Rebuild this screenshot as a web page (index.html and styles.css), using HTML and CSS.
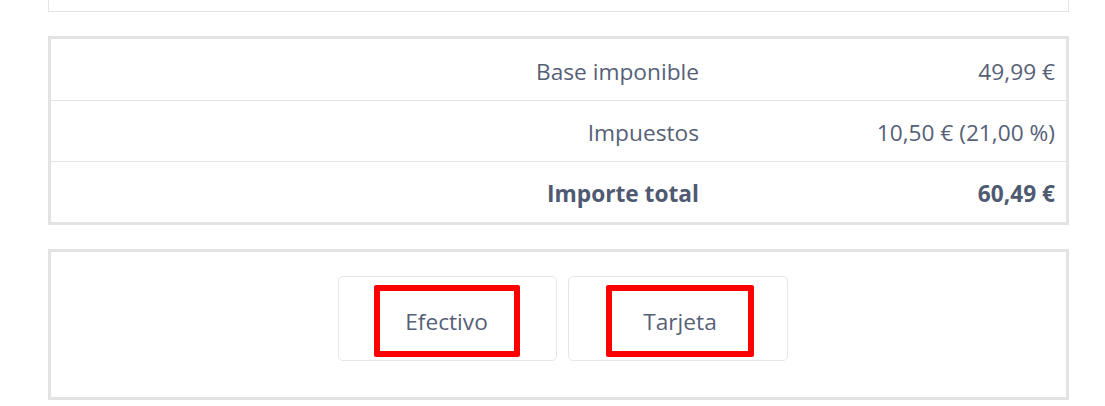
FILE: index.html
```html
<!DOCTYPE html>
<html lang="es">
<head>
<meta charset="utf-8">
<title>Resumen de pago</title>
<link rel="stylesheet" href="styles.css">
</head>
<body>
<div class="page">
  <div class="panel-prev"></div>

  <div class="totals">
    <div class="row">
      <div class="label">Base imponible</div>
      <div class="value">49,99 €</div>
    </div>
    <div class="row">
      <div class="label">Impuestos</div>
      <div class="value">10,50 € (21,00 %)</div>
    </div>
    <div class="row row-total">
      <div class="label">Importe total</div>
      <div class="value">60,49 €</div>
    </div>
  </div>

  <div class="payment">
    <button class="pay-btn" type="button"><span class="mark mark-cash">Efectivo</span></button>
    <button class="pay-btn pay-btn-wide" type="button"><span class="mark mark-card">Tarjeta</span></button>
  </div>
</div>
</body>
</html>
```

FILE: styles.css
```css
html, body {
  margin: 0;
  padding: 0;
  background: #ffffff;
}

body {
  font-family: "Open Sans", "Noto Sans", sans-serif;
  color: #566077;
}

.page {
  width: 1021px;
  margin-left: 48px;
  display: flex;
  flex-direction: column;
  gap: 24px;
}

.panel-prev {
  height: 11px;
  border: 1px solid #e3e3e3;
  border-top: none;
}

.totals {
  border: 3px solid #e3e3e3;
  display: flex;
  flex-direction: column;
}

.row {
  height: 61px;
  box-sizing: border-box;
  display: grid;
  grid-template-columns: 660px 1fr;
  align-items: center;
  font-size: 22.7px;
  line-height: 30px;
}

.row + .row {
  border-top: 1px solid #e2e5e9;
}

.label {
  text-align: right;
  padding-right: 12px;
  padding-top: 4px;
}

.value {
  text-align: right;
  padding-right: 11px;
  padding-top: 4px;
}

.row-total {
  font-weight: 700;
  color: #4f5a72;
}

.payment {
  border: 3px solid #e3e3e3;
  display: flex;
  justify-content: center;
  gap: 11px;
  padding: 24px 0 36px 9px;
}

.pay-btn {
  width: 219px;
  height: 85px;
  box-sizing: border-box;
  background: #ffffff;
  border: 1px solid #e6e6e6;
  border-radius: 5px;
  display: flex;
  align-items: flex-start;
  justify-content: center;
  padding: 8px 0 0 0;
  font-family: "Open Sans", "Noto Sans", sans-serif;
  font-size: 22.7px;
  line-height: 30px;
  color: #566077;
  cursor: pointer;
}

.pay-btn-wide {
  width: 220px;
}

.mark {
  box-sizing: border-box;
  height: 72px;
  border: 6px solid #ff0000;
  border-radius: 2px;
  display: flex;
  align-items: center;
  justify-content: center;
  padding-top: 1px;
}

.mark-cash {
  width: 146px;
  margin-left: -2px;
}

.mark-card {
  width: 148px;
  margin-left: 4px;
}
```
